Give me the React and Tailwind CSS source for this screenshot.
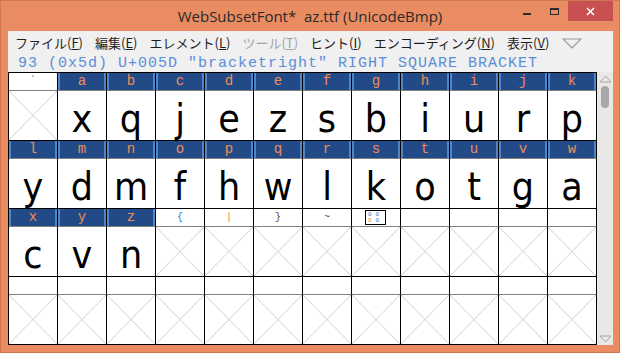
import React from "react";

const mono = { fontFamily: '"Liberation Mono", "DejaVu Sans Mono", monospace' };
const jp = { fontFamily: '"Noto Sans CJK JP", "Noto Sans", sans-serif' };

// h: header char, blue: header cell filled, g: glyph (null = empty X cell)
const filas = [
  {
    heads: [
      { h: "`", blue: false, color: "text-[#6a4a2a]" },
      ..."abcdefghijk".split("").map((c) => ({ h: c, blue: true })),
    ],
    glyphs: [null, ..."xqjezsbiurp".split("")],
  },
  {
    heads: "lmnopqrstuvw".split("").map((c) => ({ h: c, blue: true })),
    glyphs: "ydmfhwlkotga".split(""),
  },
  {
    heads: [
      ..."xyz".split("").map((c) => ({ h: c, blue: true })),
      { h: "{", blue: false, color: "text-[#3b6fc0]" },
      { h: "|", blue: false, color: "text-[#e0883c]" },
      { h: "}", blue: false, color: "text-[#6a4428]" },
      { h: "~", blue: false, color: "text-[#3a4a82]" },
      { box: true },
      {}, {}, {}, {},
    ],
    glyphs: ["c", "v", "n", null, null, null, null, null, null, null, null, null],
  },
  {
    heads: Array.from({ length: 12 }, () => ({})),
    glyphs: Array.from({ length: 12 }, () => null),
  },
];

const menus = [
  { label: "ファイル", key: "F" },
  { label: "編集", key: "E" },
  { label: "エレメント", key: "L" },
  { label: "ツール", key: "T", disabled: true },
  { label: "ヒント", key: "I" },
  { label: "エンコーディング", key: "N" },
  { label: "表示", key: "V" },
];

function CeldaVacia() {
  return (
    <svg width="48" height="49" viewBox="0 0 48 49" preserveAspectRatio="none" className="block">
      <line x1="0" y1="0" x2="48" y2="49" stroke="#d2d2d2" strokeWidth="1" />
      <line x1="48" y1="0" x2="0" y2="49" stroke="#d2d2d2" strokeWidth="1" />
    </svg>
  );
}

function Cabecera({ cell }) {
  if (cell.box) {
    return (
      <div className="h-[18px] border-r border-b border-r-black border-b-[#808080] bg-white flex items-center pl-[13px]">
        <div className="w-[21px] h-[15px] border border-black grid grid-cols-2 text-[6px] leading-[6px] px-[2px] py-[1px]" style={mono}>
          <span className="text-[#3b6fc0]">0</span>
          <span className="text-[#3b6fc0]">0</span>
          <span className="text-[#e0883c]">0</span>
          <span className="text-[#3b6fc0]">0</span>
        </div>
      </div>
    );
  }
  if (cell.blue) {
    return (
      <div className="h-[18px] border-r border-b border-r-black border-b-[#808080]">
        <div
          className="h-full bg-[#224a87] border-x-2 border-[#4f85c9] text-[#f08c58] text-[14px] leading-[17px] text-center"
          style={mono}
        >
          {cell.h}
        </div>
      </div>
    );
  }
  return (
    <div
      className={`h-[18px] border-r border-b border-r-black border-b-[#808080] bg-white text-[10px] leading-[17px] text-center ${cell.color || ""}`}
      style={mono}
    >
      {cell.h}
    </div>
  );
}

function Glifo({ g }) {
  return (
    <div className="h-[50px] border-r border-b border-black bg-white overflow-hidden flex justify-center items-start">
      {g ? (
        <span
          className="text-[39px] leading-none pt-[8px] text-black"
          style={{ fontFamily: '"Liberation Sans Narrow", "DejaVu Sans Condensed", Roboto, sans-serif' }}
        >
          {g}
        </span>
      ) : (
        <CeldaVacia />
      )}
    </div>
  );
}

export default function App() {
  return (
    <div className="w-[620px] h-[353px] bg-[#e98c62] border border-[#d27850] flex flex-col overflow-hidden">
      {/* TITULO */}
      <div className="h-[30px] grid grid-cols-[1fr_auto_1fr] items-start">
        <div />
        <div
          className="pt-[5px] text-[15px] leading-[20px] text-[#2a2a2a] whitespace-pre"
          style={{ fontFamily: '"Open Sans", "Noto Sans", sans-serif' }}
        >
          WebSubsetFont*  az.ttf (UnicodeBmp)
        </div>
        <div className="justify-self-end flex pr-[6px]">
          <div className="w-[27px] h-[20px] flex items-center justify-center">
            <div className="w-[8px] h-[2px] bg-[#2a2a2a] mt-[5px]" />
          </div>
          <div className="w-[28px] h-[20px] flex items-center justify-center">
            <div className="w-[9px] h-[7px] border border-t-2 border-[#2a2a2a]" />
          </div>
          <div className="w-[45px] h-[20px] bg-[#c75050] flex items-center justify-center">
            <svg width="9" height="9" viewBox="0 0 9 9">
              <path d="M1 1 L8 8 M8 1 L1 8" stroke="#fff" strokeWidth="1.6" />
            </svg>
          </div>
        </div>
      </div>

      {/* CLIENTE */}
      <div className="h-[314px] ml-[7px] mr-[6px] bg-[#f0f0f0] flex flex-col">
        <div className="h-[24px] flex items-center gap-3 pl-[7px] text-[13px]" style={jp}>
          {menus.map((m) => (
            <span key={m.key} className={m.disabled ? "text-[#a3a3a3]" : "text-[#1e1e1e]"}>
              {m.label}(<span className="underline">{m.key}</span>)
            </span>
          ))}
          <svg width="20" height="11" viewBox="0 0 20 11" className="ml-[1px]">
            <path d="M1 1 L19 1 L10 10 Z" fill="none" stroke="#9a9a9a" strokeWidth="1.2" />
          </svg>
        </div>

        <div className="h-[17px] pl-[10px] text-[15px] leading-[17px] tracking-[1px] text-[#5b8ed8] whitespace-pre" style={mono}>
          93 (0x5d) U+005D "bracketright" RIGHT SQUARE BRACKET
        </div>

        <div className="h-[273px] flex">
          <div className="w-[589px] border-l border-t border-black grid grid-cols-[repeat(12,49px)] content-start">
            {filas.map((fila, i) => (
              <React.Fragment key={i}>
                {fila.heads.map((cell, j) => (
                  <Cabecera key={"h" + j} cell={cell} />
                ))}
                {fila.glyphs.map((g, j) => (
                  <Glifo key={"g" + j} g={g} />
                ))}
              </React.Fragment>
            ))}
          </div>

          {/* SCROLLBAR */}
          <div className="w-[16px] bg-[#e8e8e6] flex flex-col items-center">
            <svg width="13" height="8" viewBox="0 0 13 8" className="mt-[3px]">
              <path d="M1 7 L6.5 1 L12 7 Z" fill="none" stroke="#a6a6a6" strokeWidth="1" />
            </svg>
            <div className="w-[8px] h-[22px] rounded-full bg-[#a8a8a8] mt-[3px]" />
            <div className="flex-1" />
            <svg width="13" height="8" viewBox="0 0 13 8" className="mb-[2px]">
              <path d="M1 1 L6.5 7 L12 1 Z" fill="none" stroke="#a6a6a6" strokeWidth="1" />
            </svg>
          </div>
        </div>
      </div>
    </div>
  );
}
